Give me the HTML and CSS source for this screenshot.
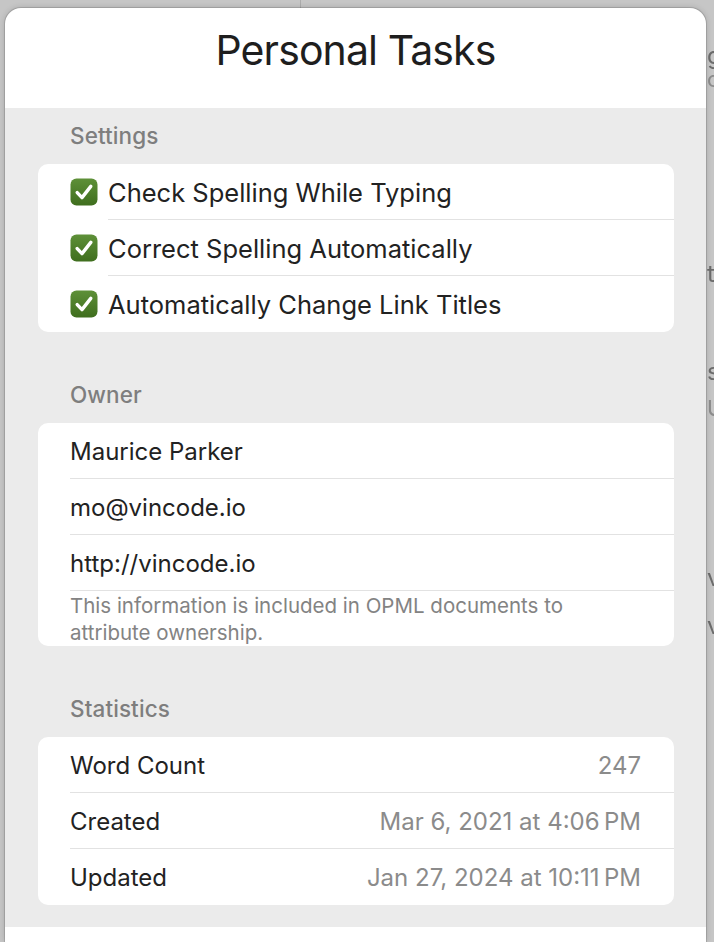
FILE: index.html
```html
<!DOCTYPE html>
<html>
<head>
<meta charset="utf-8">
<link rel="stylesheet" href="styles.css">
</head>
<body>
<div class="backdrop">
  <div class="bg-pane-left"></div>
  <div class="bg-pane-right">
    <span class="bg-word bg-g">g</span>
    <span class="bg-word bg-c">c</span>
    <span class="bg-word bg-t">t</span>
    <span class="bg-word bg-s">s</span>
    <span class="bg-word bg-u">U</span>
    <span class="bg-word bg-v1">v</span>
    <span class="bg-word bg-v2">v</span>
  </div>

  <div class="sheet">
    <header class="sheet-header">
      <h1 class="title">Personal Tasks</h1>
    </header>
    <main class="sheet-body">
      <section class="group">
        <h2 class="group-label">Settings</h2>
        <div class="card">
          <div class="check-row">
            <span class="checkbox"><svg width="28" height="28" viewBox="0 0 28 28"><defs><linearGradient id="g1" x1="0" y1="0" x2="0" y2="1"><stop offset="0" stop-color="#5e9038"/><stop offset="1" stop-color="#3f6e1e"/></linearGradient></defs><rect x="0.5" y="0.5" width="27" height="27" rx="6" fill="url(#g1)"/><path d="M7.2 14.6 L12 19.6 L20.8 8.4" fill="none" stroke="#fff" stroke-width="3.4" stroke-linecap="round" stroke-linejoin="round"/></svg></span>
            <span class="check-text">Check Spelling While Typing</span>
          </div>
          <div class="check-row">
            <span class="checkbox"><svg width="28" height="28" viewBox="0 0 28 28"><defs><linearGradient id="g2" x1="0" y1="0" x2="0" y2="1"><stop offset="0" stop-color="#5e9038"/><stop offset="1" stop-color="#3f6e1e"/></linearGradient></defs><rect x="0.5" y="0.5" width="27" height="27" rx="6" fill="url(#g2)"/><path d="M7.2 14.6 L12 19.6 L20.8 8.4" fill="none" stroke="#fff" stroke-width="3.4" stroke-linecap="round" stroke-linejoin="round"/></svg></span>
            <span class="check-text">Correct Spelling Automatically</span>
          </div>
          <div class="check-row">
            <span class="checkbox"><svg width="28" height="28" viewBox="0 0 28 28"><defs><linearGradient id="g3" x1="0" y1="0" x2="0" y2="1"><stop offset="0" stop-color="#5e9038"/><stop offset="1" stop-color="#3f6e1e"/></linearGradient></defs><rect x="0.5" y="0.5" width="27" height="27" rx="6" fill="url(#g3)"/><path d="M7.2 14.6 L12 19.6 L20.8 8.4" fill="none" stroke="#fff" stroke-width="3.4" stroke-linecap="round" stroke-linejoin="round"/></svg></span>
            <span class="check-text">Automatically Change Link Titles</span>
          </div>
        </div>
      </section>

      <section class="group">
        <h2 class="group-label">Owner</h2>
        <div class="card">
          <div class="row">Maurice Parker</div>
          <div class="row">mo@vincode.io</div>
          <div class="row">http://vincode.io</div>
          <p class="note">This information is included in OPML documents to attribute ownership.</p>
        </div>
      </section>

      <section class="group">
        <h2 class="group-label">Statistics</h2>
        <div class="card">
          <div class="row stat"><span>Word Count</span><span class="value">247</span></div>
          <div class="row stat"><span>Created</span><span class="value">Mar 6, 2021 at 4:06&#8239;PM</span></div>
          <div class="row stat"><span>Updated</span><span class="value">Jan 27, 2024 at 10:11&#8239;PM</span></div>
        </div>
      </section>
    </main>
    <footer class="sheet-footer"></footer>
  </div>
</div>
</body>
</html>
```

FILE: styles.css
```css
* { box-sizing: border-box; }
html, body { margin: 0; padding: 0; }
body {
  font-family: Inter, "Noto Sans", "Liberation Sans", sans-serif;
  background: #c6c6c6;
}
.backdrop {
  position: relative;
  width: 714px;
  height: 942px;
  overflow: hidden;
  display: flex;
  background: #c6c6c6;
}
.bg-pane-left {
  width: 301px;
  border-right: 1px solid #acacac;
  height: 100%;
}
.bg-pane-right {
  flex: 1;
  position: relative;
  height: 100%;
}
.bg-word {
  position: absolute;
  left: 406px;
  color: #6c6c6c;
  font-size: 24px;
  line-height: 1;
  filter: blur(0.4px);
}
.bg-g { top: 44px; }
.bg-c { top: 68px; font-size: 22px; color: #8d8d8d; }
.bg-t { top: 262px; }
.bg-s { top: 360px; }
.bg-u { top: 397px; font-size: 22px; color: #8d8d8d; }
.bg-v1 { top: 566px; }
.bg-v2 { top: 614px; }

.sheet {
  position: absolute;
  left: 5px;
  top: 8px;
  width: 701px;
  bottom: 0;
  background: #fff;
  border-radius: 16px 16px 0 0;
  overflow: hidden;
  display: flex;
  flex-direction: column;
  box-shadow: 0 0 0 1px rgba(0,0,0,0.12), 0 0 6px rgba(0,0,0,0.18);
}
.sheet-header {
  height: 100px;
  display: flex;
  justify-content: center;
  padding-top: 18px;
}
.title {
  margin: 0;
  font-size: 41px;
  line-height: 48px;
  font-weight: 400;
  color: #1e1e1e;
  letter-spacing: -0.9px;
}
.sheet-body {
  background: #ebebeb;
  padding: 0 32px 22px 33px;
}
.sheet-footer {
  flex: 1;
  background: #fff;
}
.group + .group { margin-top: 35px; }
.group-label {
  margin: 0;
  height: 56px;
  line-height: 56px;
  padding-left: 32px;
  font-size: 22.5px;
  font-weight: 500;
  letter-spacing: 0.1px;
  color: #7e7e7e;
}
.card {
  background: #fff;
  border-radius: 10px;
  overflow: hidden;
}
.check-row {
  height: 56px;
  display: flex;
  align-items: center;
  padding-left: 32px;
}
.checkbox {
  width: 28px;
  height: 28px;
  margin-right: 10px;
  display: flex;
}
.check-text {
  flex: 1;
  height: 56px;
  line-height: 58px;
  font-size: 25.5px;
  color: #222;
  border-bottom: 1px solid #e2e2e2;
}
.check-row:last-child .check-text { border-bottom: none; }
.row {
  height: 56px;
  line-height: 57px;
  margin-left: 32px;
  padding-right: 33px;
  font-size: 24px;
  color: #222;
  border-bottom: 1px solid #e2e2e2;
}
.card > .row:last-child { border-bottom: none; }
.stat {
  display: flex;
  justify-content: space-between;
}
.value { color: #8b8b8b; }
.note {
  margin: 0 0 0 32px;
  padding: 1px 90px 0 0;
  height: 55px;
  font-size: 20.5px;
  line-height: 27px;
  color: #838383;
}
```
